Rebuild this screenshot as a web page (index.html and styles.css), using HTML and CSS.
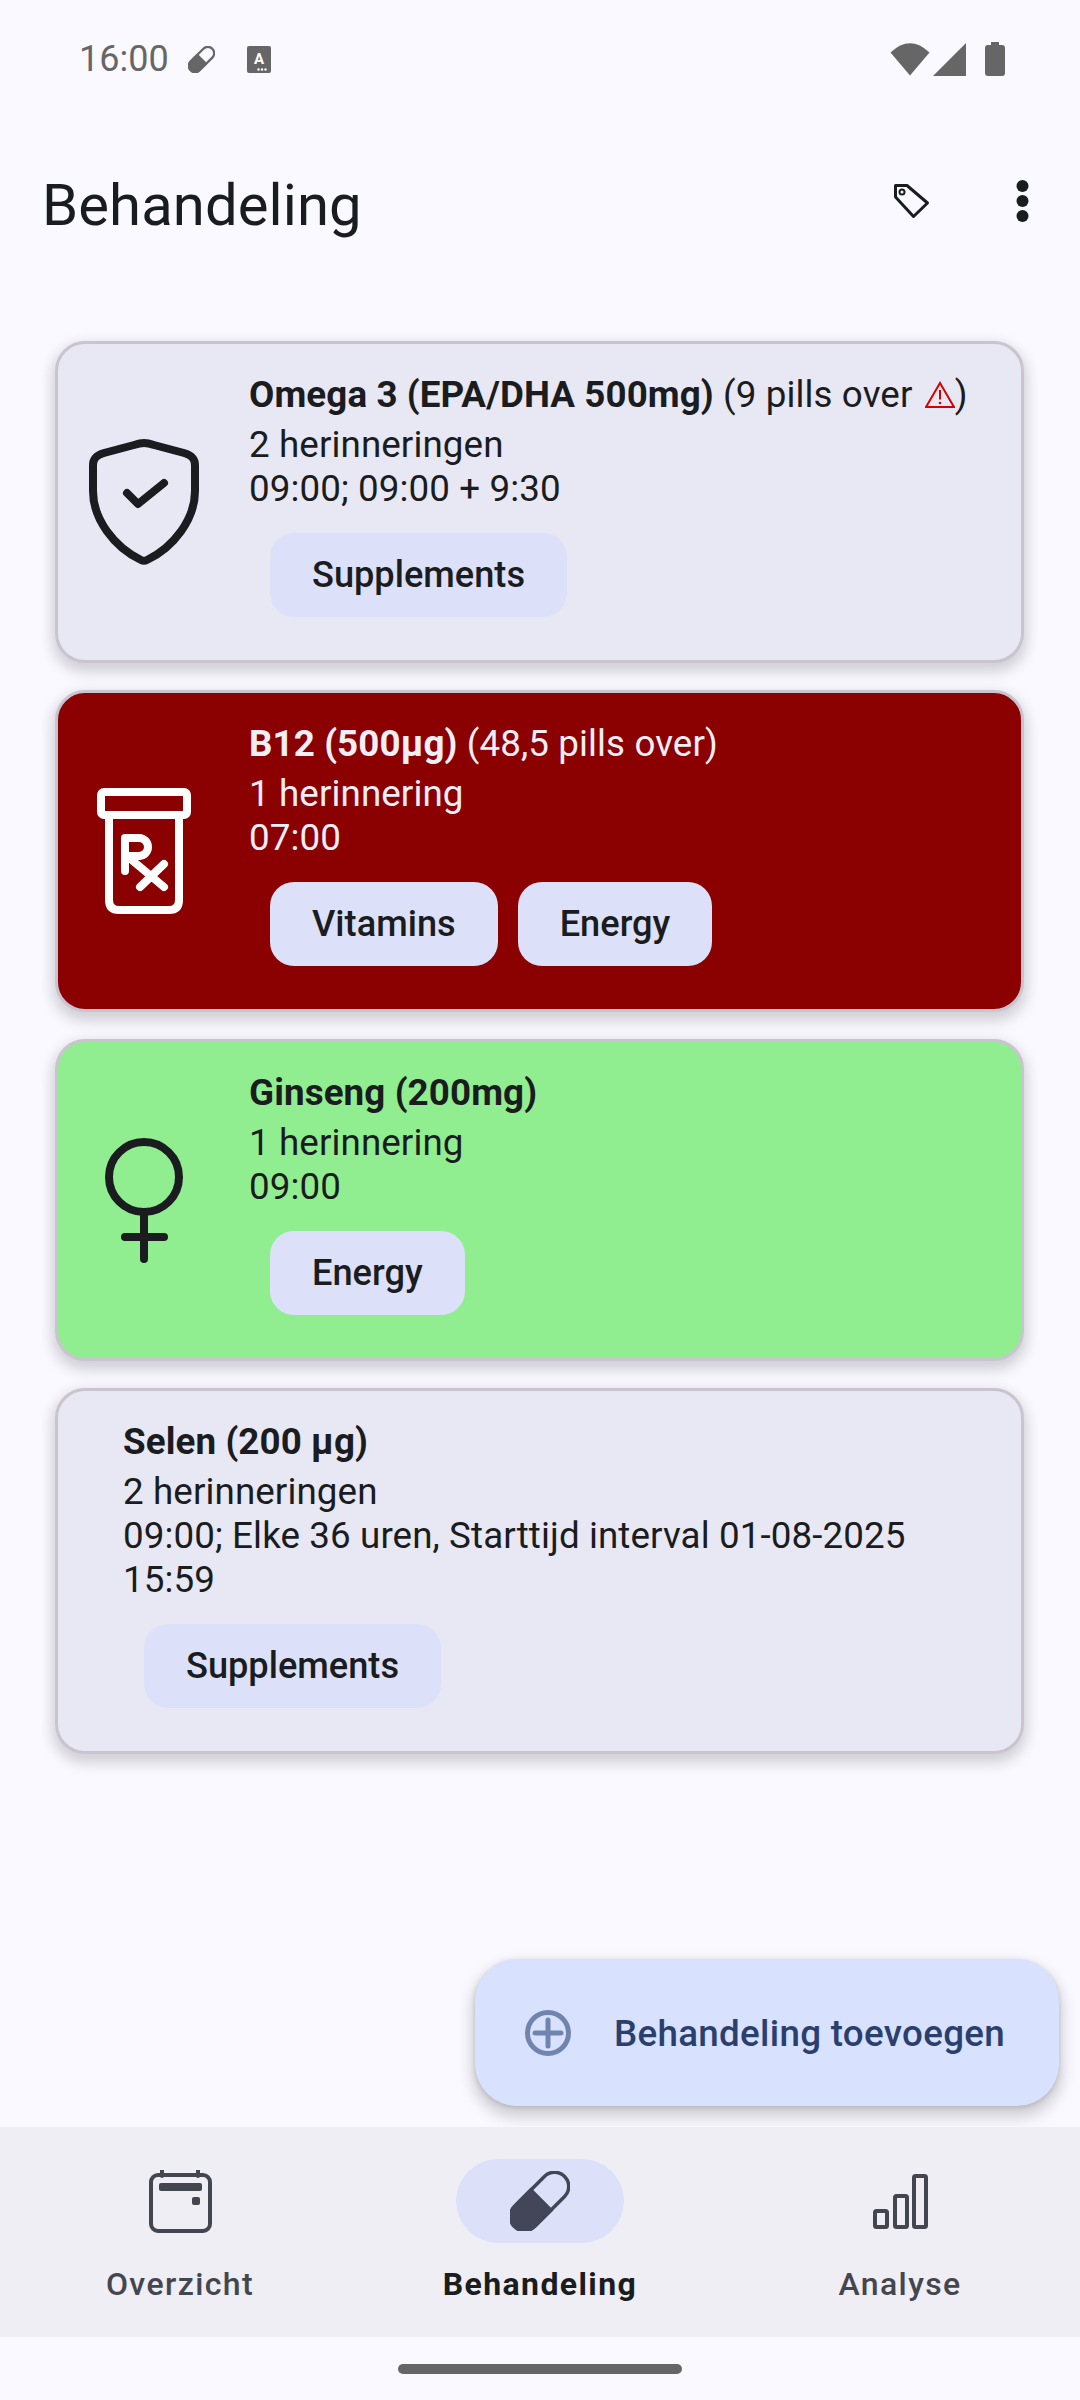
FILE: index.html
```html
<!DOCTYPE html>
<html lang="nl">
<head>
<meta charset="utf-8">
<title>Behandeling</title>
<link rel="stylesheet" href="styles.css">
</head>
<body>
<div class="page">
  <header class="status">
    <div class="status-left">
      <span class="time">16:00</span>
      <svg class="st-pill" viewBox="0 0 60 60"><g transform="rotate(-45 30 30)"><rect x="-4" y="16" width="68" height="28" rx="14" fill="none" stroke="#666" stroke-width="5"/><path d="M33 14H10a16 16 0 0 0 0 32h23z" fill="#666"/></g></svg>
      <svg class="st-a" viewBox="0 0 24 27"><rect width="24" height="27" rx="2" fill="#666"/><text class="st-a-letter" x="12" y="18" text-anchor="middle">A</text><circle cx="15" cy="23.5" r="1.2" fill="#fff"/><circle cx="18.5" cy="23.5" r="1.2" fill="#fff"/><circle cx="11.5" cy="23.5" r="1.2" fill="#fff"/></svg>
    </div>
    <div class="status-right">
      <svg class="st-wifi" viewBox="0 0 40 33"><path d="M20 32.5L.5 9.5Q20-9 39.500 9.500Z" fill="#666"/></svg>
      <svg class="st-signal" viewBox="0 0 33 33"><path d="M0 33H33V0Z" fill="#666"/></svg>
      <svg class="st-batt" viewBox="0 0 20 34"><path d="M6 0h8v3h3a3 3 0 0 1 3 3v25a3 3 0 0 1-3 3H3a3 3 0 0 1-3-3V6a3 3 0 0 1 3-3h3z" fill="#666"/></svg>
    </div>
  </header>

  <div class="appbar">
    <h1 class="title">Behandeling</h1>
    <div class="actions">
      <svg class="tag" viewBox="0 0 37 36"><path d="M2.500 2.500H14L34.500 20 20.500 33.500 2.500 14Z" fill="none" stroke="#1a1c20" stroke-width="3" stroke-linejoin="round"/><circle cx="9" cy="9" r="2.500" fill="none" stroke="#1a1c20" stroke-width="2"/></svg>
      <svg class="dots" viewBox="0 0 13 42"><circle cx="6.500" cy="6" r="6" fill="#1a1c20"/><circle cx="6.500" cy="21" r="6" fill="#1a1c20"/><circle cx="6.500" cy="36" r="6" fill="#1a1c20"/></svg>
    </div>
  </div>

  <main class="main">
    <div class="list">
      <article class="card">
        <div class="icon-col">
          <svg class="ic-shield" viewBox="0 0 110 126"><path d="M55 4C59 4 62 5 65 6L95 14C102 16 106 19 106 26L106 52C106 80 85 108 58 121C56 122 54 122 52 121C25 108 4 80 4 52L4 26C4 19 8 16 15 14L45 6C48 5 51 4 55 4Z" fill="none" stroke="#1a1c20" stroke-width="8" stroke-linejoin="round"/><path d="M38 54L49 65L75 44" fill="none" stroke="#1a1c20" stroke-width="8" stroke-linecap="round" stroke-linejoin="round"/></svg>
        </div>
        <div class="body">
          <p class="head"><b>Omega 3 (EPA/DHA 500mg)</b> (9 pills over <svg class="warn" viewBox="0 0 30 27"><path d="M15 2L29 26H1Z" fill="none" stroke="#d50000" stroke-width="2"/><path d="M15 9V18.500" stroke="#d50000" stroke-width="2"/><circle cx="15" cy="22" r="1.300" fill="#d50000"/></svg>)</p>
          <p class="line">2 herinneringen</p>
          <p class="line">09:00; 09:00 + 9:30</p>
          <div class="chips"><span class="chip">Supplements</span></div>
        </div>
      </article>

      <article class="card card-red">
        <div class="icon-col">
          <svg class="ic-rx" viewBox="0 0 94 126"><g fill="none" stroke="#fff" stroke-width="8" stroke-linecap="round" stroke-linejoin="round"><rect x="4" y="4" width="86" height="23" rx="3"/><path d="M12 27V112Q12 122 22 122H72Q82 122 82 112V27"/><path d="M28 83V50H42a9 9 0 0 1 0 18H30L67 99"/><path d="M67 76L43 99"/></g></svg>
        </div>
        <div class="body">
          <p class="head"><b>B12 (500µg)</b> (48,5 pills over)</p>
          <p class="line">1 herinnering</p>
          <p class="line">07:00</p>
          <div class="chips"><span class="chip">Vitamins</span><span class="chip">Energy</span></div>
        </div>
      </article>

      <article class="card card-green">
        <div class="icon-col">
          <svg class="ic-venus" viewBox="0 0 78 125"><g fill="none" stroke="#1a1c20" stroke-width="8" stroke-linecap="round"><circle cx="39" cy="39" r="35"/><path d="M39 78V121M20 99H59"/></g></svg>
        </div>
        <div class="body">
          <p class="head"><b>Ginseng (200mg)</b></p>
          <p class="line">1 herinnering</p>
          <p class="line">09:00</p>
          <div class="chips"><span class="chip">Energy</span></div>
        </div>
      </article>

      <article class="card card-plain">
        <div class="body">
          <p class="head"><b>Selen (200 µg)</b></p>
          <p class="line">2 herinneringen</p>
          <p class="line">09:00; Elke 36 uren, Starttijd interval 01-08-2025 15:59</p>
          <div class="chips"><span class="chip">Supplements</span></div>
        </div>
      </article>
    </div>

    <button class="fab">
      <svg class="fab-icon" viewBox="0 0 46 46"><circle cx="23" cy="23" r="20.500" fill="none" stroke="#7184ae" stroke-width="5"/><path d="M10 23H36M23 10V36" stroke="#7184ae" stroke-width="5" stroke-linecap="round"/></svg>
      <span class="fab-label">Behandeling toevoegen</span>
    </button>
  </main>

  <nav class="nav">
    <div class="tab">
      <div class="tab-icon">
        <svg class="ic-cal" viewBox="0 0 63 63"><rect x="2" y="5" width="59" height="56" rx="7" fill="none" stroke="#44464f" stroke-width="4"/><path d="M13 0V6M49 0V6" stroke="#44464f" stroke-width="4" stroke-linecap="round"/><rect x="10" y="13" width="43" height="8" rx="2" fill="#44464f"/><rect x="43" y="27" width="8" height="8" rx="2" fill="#44464f"/></svg>
      </div>
      <span class="tab-label">Overzicht</span>
    </div>
    <div class="tab tab-active">
      <div class="tab-icon">
        <svg class="ic-pill" viewBox="0 0 60 60"><g transform="rotate(-45 30 30)"><rect x="-4.750" y="15.750" width="69.500" height="28.500" rx="14.250" fill="none" stroke="#434659" stroke-width="3.500"/><path d="M33 14H8a16 16 0 0 0 0 32h25z" fill="#434659"/></g></svg>
      </div>
      <span class="tab-label">Behandeling</span>
    </div>
    <div class="tab">
      <div class="tab-icon">
        <svg class="ic-bars" viewBox="0 0 55 55"><g fill="none" stroke="#44464f" stroke-width="4" stroke-linejoin="round"><rect x="2" y="37" width="12" height="16" rx="1.500"/><rect x="22" y="22" width="12" height="31" rx="1.500"/><rect x="41" y="2" width="12" height="51" rx="1.500"/></g></svg>
      </div>
      <span class="tab-label">Analyse</span>
    </div>
  </nav>

  <footer class="home"><span class="home-bar"></span></footer>
</div>
</body>
</html>
```

FILE: styles.css
```css
* { box-sizing: border-box; }
html, body { margin: 0; padding: 0; }
body { font-family: Roboto, "Liberation Sans", sans-serif; color: #1a1c20; background: #f9f9ff; }
svg { display: block; flex: none; }
p { margin: 0; }

.page { width: 1080px; height: 2400px; display: flex; flex-direction: column; overflow: hidden; }

.status { height: 118px; flex: none; display: flex; justify-content: space-between; align-items: center; padding: 0 75px 0 79px; }
.status-left { display: flex; align-items: center; }
.time { font-size: 36px; color: #666; line-height: 44px; width: 109px; }
.st-pill { width: 27px; height: 27px; }
.st-a { width: 24px; height: 27px; margin-left: 32px; }
.st-a-letter { font: 700 15px Roboto, sans-serif; fill: #fff; }
.status-right { display: flex; align-items: center; }
.st-wifi { width: 40px; height: 33px; }
.st-signal { width: 33px; height: 33px; margin-left: 3px; }
.st-batt { width: 20px; height: 34px; margin-left: 19px; }

.appbar { height: 174px; flex: none; display: flex; justify-content: space-between; align-items: center; padding: 0 51px 0 42px; }
.title { margin: 0; font-size: 58px; font-weight: 400; line-height: 70px; letter-spacing: .1px; }
.actions { display: flex; align-items: center; gap: 86px; margin-bottom: 8px; }
.tag { width: 37px; height: 36px; }
.dots { width: 13px; height: 42px; }

.main { flex: 1; position: relative; min-height: 0; }
.list { margin: 0 42px; padding: 49px 14px 30px 13px; overflow: hidden; display: flex; flex-direction: column; gap: 27px; }

.card { display: flex; align-items: center; background: #e8e8f4; border: 3px solid #cac4d0; border-radius: 30px; box-shadow: 0 6px 14px 3px rgba(0, 0, 0, .17); padding: 29px 20px 43px 0; color: #1a1c20; }
.card-red { background: #8b0000; color: #f0eef6; }
.card-green { background: #90ee90; }
.card-plain { padding-left: 65px; }

.icon-col { width: 172px; margin-right: 19px; flex: none; display: flex; justify-content: center; padding-top: 14px; }
.ic-shield { width: 110px; height: 126px; }
.ic-rx { width: 94px; height: 126px; }
.ic-venus { width: 78px; height: 125px; }

.body { flex: 1; min-width: 0; }
.head { font-size: 36.75px; line-height: 44px; margin-bottom: 6px; white-space: nowrap; letter-spacing: .1px; }
.head b { font-weight: 700; }
.line { font-size: 36.75px; line-height: 44px; letter-spacing: .1px; }
.warn { display: inline-block; width: 30px; height: 27px; vertical-align: -1px; margin-left: 3px; }

.chips { display: flex; gap: 20px; margin: 22px 0 0 21px; }
.chip { height: 84px; padding: 0 42px; border-radius: 24px; background: #dce1f9; color: #1a1c20; font-size: 36.2px; font-weight: 500; line-height: 84px; white-space: nowrap; }

.fab { position: absolute; right: 21px; bottom: 21px; height: 147px; width: 584px; padding: 0 0 0 50px; border: 0; border-radius: 42px; background: #d8e2ff; box-shadow: 0 8px 14px 4px rgba(0, 0, 0, .16), 0 2px 5px rgba(0, 0, 0, .14); display: flex; align-items: center; gap: 43px; color: #2b3f6e; font: 500 36.75px Roboto, sans-serif; letter-spacing: .3px; white-space: nowrap; }
.fab-icon { width: 46px; height: 46px; }
.fab-label { padding-top: 2px; }

.nav { height: 210px; flex: none; position: relative; z-index: 1; background: #eeeef4; display: grid; grid-template-columns: repeat(3, 1fr); padding: 32px 0 0; }
.tab { display: flex; flex-direction: column; align-items: center; }
.tab-icon { width: 168px; height: 84px; border-radius: 42px; display: flex; align-items: center; justify-content: center; }
.tab-active .tab-icon { background: #dce1f9; }
.tab-label { margin-top: 19px; font-size: 32px; line-height: 44px; letter-spacing: 1.4px; color: #44464f; font-weight: 500; }
.tab-active .tab-label { color: #1a1c20; font-weight: 700; }
.ic-cal { width: 63px; height: 63px; }
.ic-pill { width: 60px; height: 60px; }
.ic-bars { width: 55px; height: 55px; }

.home { height: 63px; flex: none; display: flex; justify-content: center; padding-top: 27px; }
.home-bar { width: 284px; height: 10px; border-radius: 5px; background: #666; }
```
